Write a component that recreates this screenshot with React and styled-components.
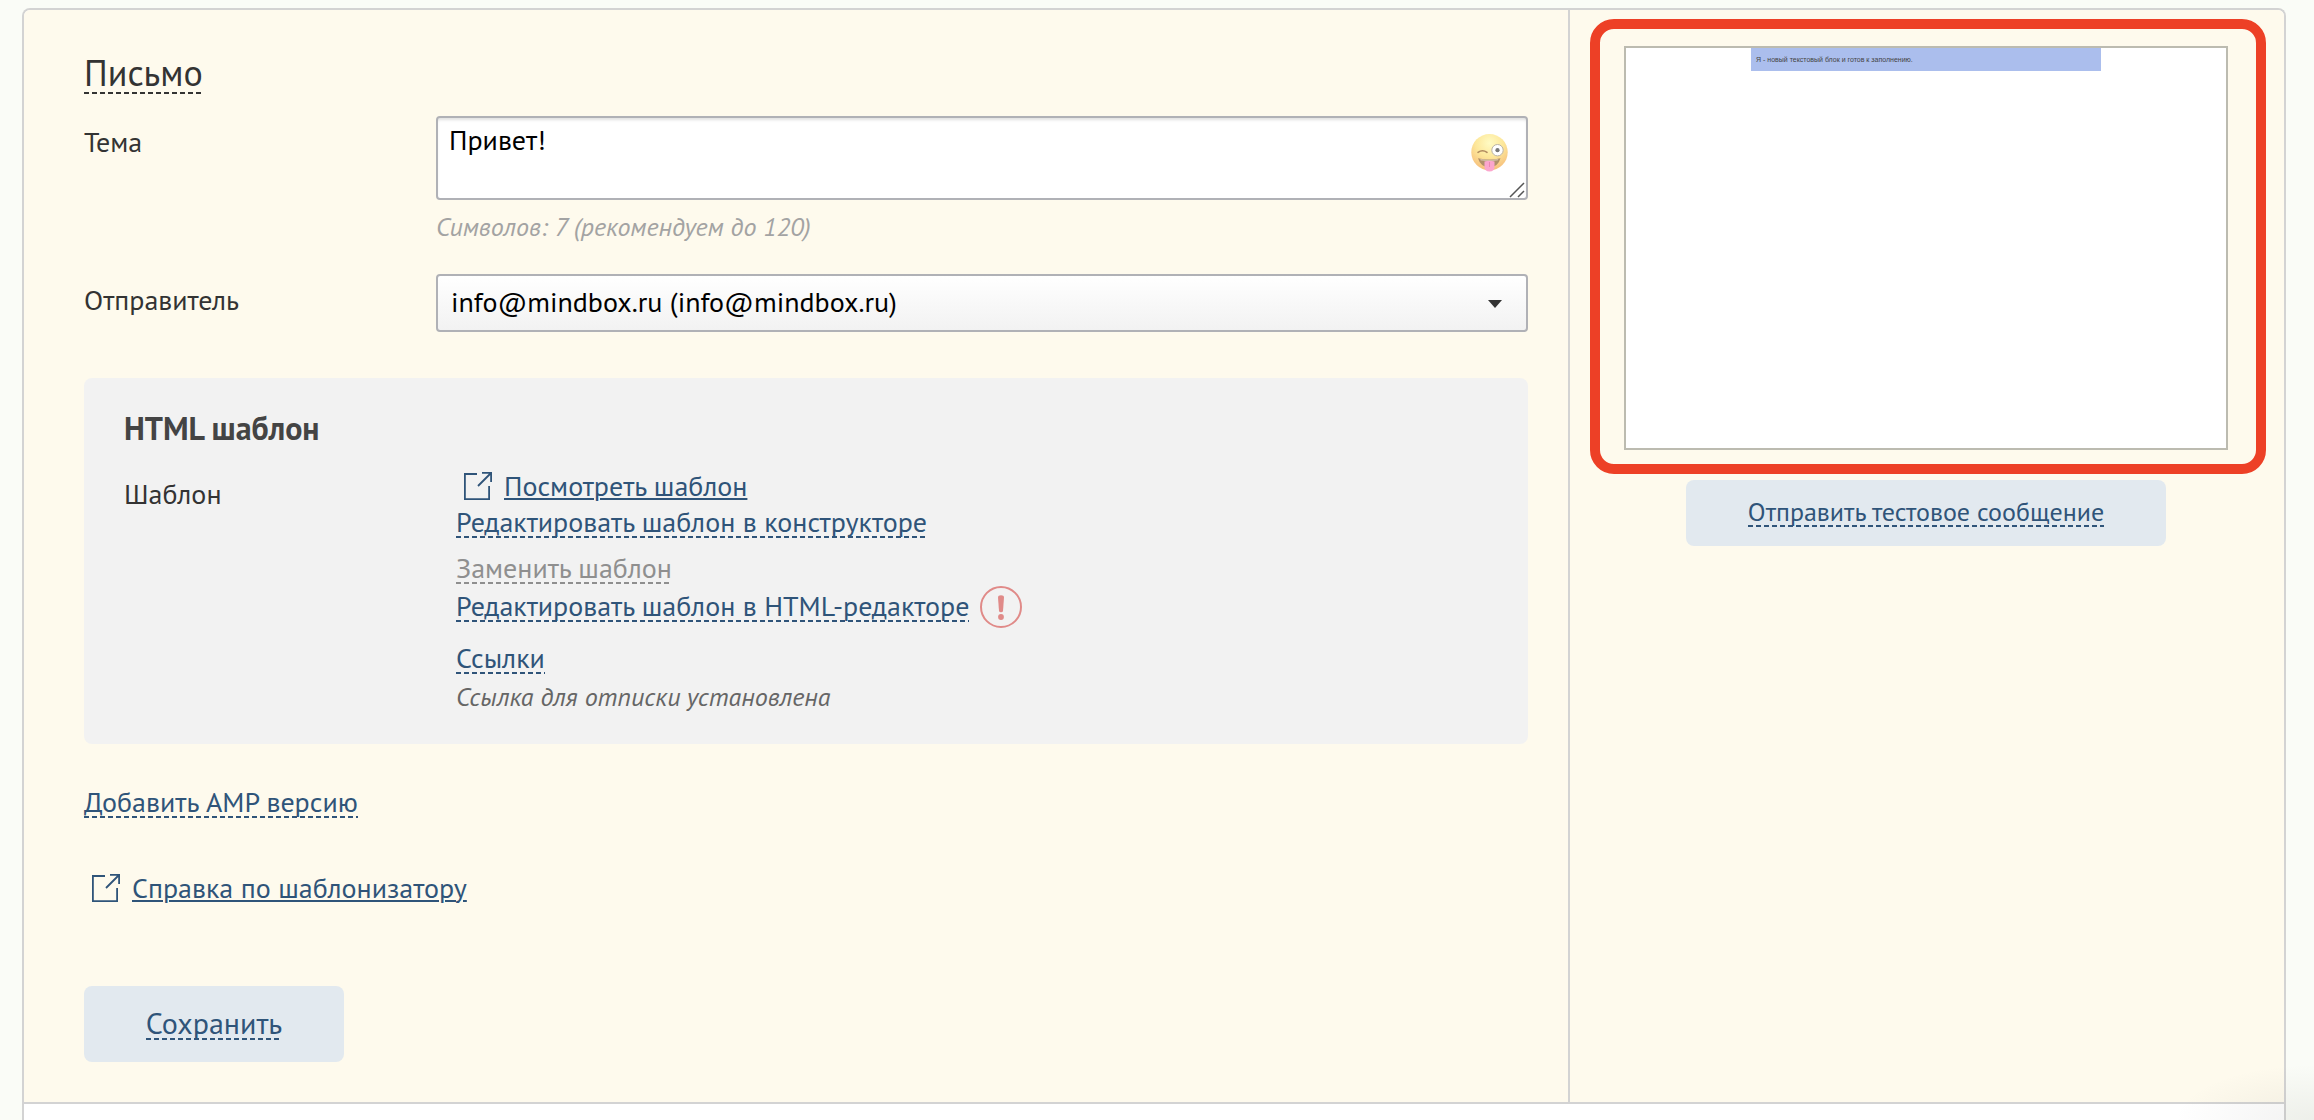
import React, { useState } from 'react'
import styled, { createGlobalStyle, css } from 'styled-components'

const GlobalStyle = createGlobalStyle`
	* {
		box-sizing: border-box;
	}

	body {
		margin: 0;
		background-color: #fafcf7;
		color: #333;
		font-family: 'PT Sans', 'Noto Sans', sans-serif;
		font-size: 28px;
		line-height: 32px;
	}
`

const dashed = css`
	padding: 0 0 2px;
	background: repeating-linear-gradient(90deg, currentColor 0 5px, transparent 5px 8px) left bottom / 100% 2px no-repeat;
`

const Page = styled.div`
	position: relative;
	display: flex;
	min-height: 100vh;
	padding: 8px 28px 0 22px;

	&::after {
		content: '';
		position: absolute;
		right: 0;
		bottom: 0;
		width: 140px;
		height: 56px;
		background: radial-gradient(ellipse at bottom right, rgba(90, 90, 80, 0.08), rgba(90, 90, 80, 0) 70%);
		pointer-events: none;
	}
`

const Frame = styled.div`
	display: flex;
	flex-direction: column;
	flex: 1;
	border: 2px solid #d3d3d3;
	border-bottom: none;
	border-radius: 8px 8px 0 0;
	background-color: #fff;
	overflow: hidden;
`

const Editor = styled.div`
	display: flex;
	background-color: #fefaed;
	border-bottom: 2px solid #d3d3d3;
`

const Form = styled.form`
	display: flex;
	flex-direction: column;
	align-items: flex-start;
	flex: 1;
	padding: 44px 40px 40px 60px;
`

const Title = styled.h1`
	${dashed}
	margin: 0 0 22px;
	font-size: 36px;
	font-weight: 400;
	line-height: 38px;
`

const Field = styled.div`
	display: flex;
	align-self: stretch;
	margin-bottom: ${(props) => props.$gap}px;
`

const Label = styled.label`
	flex: none;
	width: 352px;
	padding-top: 10px;
`

const Control = styled.div`
	position: relative;
	flex: 1;
`

const inputBox = css`
	display: block;
	width: 100%;
	margin: 0;
	border: 2px solid #b0b1b6;
	border-radius: 4px;
	color: #000;
	font-family: inherit;
	font-size: 28px;
	line-height: 32px;
`

const Subject = styled.textarea`
	${inputBox}
	height: 84px;
	padding: 6px 80px 6px 11px;
	background-color: #fff;
	box-shadow: inset 0 3px 3px -1px rgba(0, 0, 0, 0.12);
	resize: none;
`

const EmojiButton = styled.button`
	position: absolute;
	top: 18px;
	right: 20px;
	padding: 0;
	border: none;
	background: none;

	svg {
		display: block;
	}
`

const Grip = styled.svg`
	position: absolute;
	top: 66px;
	right: 3px;
	pointer-events: none;
`

const Hint = styled.p`
	margin: 11px 0 0;
	color: #a3a3a3;
	font-size: 26px;
	font-style: italic;
`

const Sender = styled.select`
	${inputBox}
	height: 58px;
	padding: 0 60px 2px 13px;
	background: linear-gradient(#fff, #f2f2f2);
	appearance: none;
`

const Arrow = styled.svg`
	position: absolute;
	top: 26px;
	right: 26px;
	pointer-events: none;
`

const Template = styled.section`
	align-self: stretch;
	margin-bottom: 44px;
	padding: 32px 40px;
	border-radius: 8px;
	background-color: #f2f2f2;
`

const TemplateTitle = styled.h2`
	margin: 0 0 26px;
	color: #444;
	font-size: 32px;
	line-height: 36px;
`

const TemplateBody = styled.div`
	display: flex;
`

const TemplateLabel = styled.div`
	flex: none;
	width: 332px;
	padding-top: 6px;
`

const TemplateActions = styled.div`
	display: flex;
	flex-direction: column;
	align-items: flex-start;
`

const ActionGroup = styled.div`
	display: flex;
	flex-direction: column;
	align-items: flex-start;
	gap: ${(props) => props.$gap}px;
	margin-bottom: ${(props) => (props.$last ? 0 : 16)}px;
`

const ActionRow = styled.div`
	display: flex;
	align-items: center;
	gap: 11px;
`

const ActionLink = styled.button`
	${dashed}
	border: none;
	color: #2f5479;
	font-family: inherit;
	font-size: 28px;
	line-height: 28px;

	&:disabled {
		color: #8f8f8f;
	}
`

const Note = styled.p`
	margin: 0;
	color: #666;
	font-size: 26px;
	font-style: italic;
	line-height: 30px;
`

const OuterLink = styled.a`
	display: flex;
	gap: 12px;
	padding-left: 8px;
	color: #2f5479;
	line-height: 28px;
	text-decoration: none;

	span {
		height: 30px;
		text-decoration: underline 2px;
		text-underline-offset: 2px;
	}
`

const HelpLink = styled(OuterLink)`
	margin: 56px 0 82px;
`

const Button = styled.button`
	width: ${(props) => (props.$wide ? 480 : 260)}px;
	height: ${(props) => (props.$wide ? 66 : 76)}px;
	padding: 0;
	border: none;
	border-radius: 8px;
	background-color: #e2e9ef;
	color: #2f5479;
	font-family: inherit;
	font-size: ${(props) => (props.$wide ? 26 : 30)}px;
	line-height: 1;

	span {
		${dashed}
		display: inline-block;
	}
`

const Sidebar = styled.aside`
	flex: none;
	width: 716px;
	padding: 9px 18px 0 20px;
	border-left: 2px solid #d3d3d3;
`

const Highlight = styled.div`
	margin-bottom: 6px;
	padding: 17px 28px 14px 24px;
	border: 10px solid #ed4026;
	border-radius: 24px;
`

const Preview = styled.div`
	height: 404px;
	border: 2px solid #bcbbb0;
	background-color: #fff;
`

const MailBlock = styled.p`
	width: 350px;
	margin: 0 auto;
	padding: 0 5px;
	background-color: #abbeed;
	color: #444;
	font-family: 'Liberation Sans', Arial, sans-serif;
	font-size: 7px;
	line-height: 23px;
`

const SidebarActions = styled.div`
	display: flex;
	justify-content: center;
	padding-right: 4px;
`

function ExternalIcon() {
	return (
		<svg width="28" height="28" viewBox="0 0 28 28" fill="none" stroke="#2f5479" strokeWidth="1.8" aria-hidden="true">
			<path d="M13 2H.9v25.1h24.2V14" />
			<path d="M18 .9h9.1V10M27 1L14 14" />
		</svg>
	)
}

function WarningIcon() {
	return (
		<svg width="42" height="42" viewBox="0 0 42 42" aria-hidden="true">
			<circle cx="21" cy="21" r="20" fill="none" stroke="#e08a88" strokeWidth="2" />
			<path d="M18 11.5Q18 9.3 21 9.3T24 11.5L23 25Q22.8 26.3 21 26.3T19 25Z" fill="#e08a88" />
			<circle cx="21" cy="31" r="2.9" fill="#e08a88" />
		</svg>
	)
}

function WinkIcon() {
	return (
		<svg width="37" height="38" viewBox="0 0 37 38" aria-hidden="true">
			<defs>
				<radialGradient id="face" cx="50%" cy="25%" r="76%">
					<stop offset="0" stopColor="#fffbc4" />
					<stop offset="0.5" stopColor="#fde79a" />
					<stop offset="1" stopColor="#f6bd7a" />
				</radialGradient>
			</defs>
			<circle cx="18.5" cy="18.2" r="18.2" fill="url(#face)" />
			<path d="M7 18.3q4.500-3.200 9 0" fill="none" stroke="#b08a5e" strokeWidth="1.600" strokeLinecap="round" />
			<circle cx="26.500" cy="16.200" r="5.700" fill="#fff" stroke="#b9b3a6" strokeWidth="1" />
			<circle cx="26.500" cy="16.200" r="2.100" fill="#777" />
			<path d="M7 24.200q11.500 2.600 22.500 0-2.500 9-11.200 9T7 24.200Z" fill="#b0906a" />
			<path d="M9 24.800q9.500 2 18.500 0l-.8 1.600q-8.500 1.600-17 0Z" fill="#efe6d6" opacity="0.5" />
			<path d="M13.500 27.500q5-1.600 10 0v5q0 5-5 5t-5-5Z" fill="#fba6cd" />
			<path d="M18.500 28v5" stroke="#ee86b4" strokeWidth="1" />
		</svg>
	)
}

function App() {
	const [subject, setSubject] = useState('Привет!')

	return (
		<Page>
			<GlobalStyle />
			<Frame>
				<Editor>
					<Form onSubmit={(e) => e.preventDefault()}>
						<Title>Письмо</Title>
						<Field $gap={31}>
							<Label htmlFor="subject">Тема</Label>
							<Control>
								<Subject id="subject" value={subject} onChange={(e) => setSubject(e.target.value)} />
								<EmojiButton type="button" aria-label="Эмодзи">
									<WinkIcon />
								</EmojiButton>
								<Grip width="16" height="16" viewBox="0 0 16 16" stroke="#555" strokeWidth="1.5">
									<path d="M1 15L15 1M9 15l6-6" />
								</Grip>
								<Hint>Символов: {subject.length} (рекомендуем до 120)</Hint>
							</Control>
						</Field>
						<Field $gap={46}>
							<Label htmlFor="sender">Отправитель</Label>
							<Control>
								<Sender id="sender">
									<option>info@mindbox.ru (info@mindbox.ru)</option>
								</Sender>
								<Arrow width="14" height="8" viewBox="0 0 14 8">
									<path d="M0 0h14L7 8Z" fill="#333" />
								</Arrow>
							</Control>
						</Field>
						<Template>
							<TemplateTitle>HTML шаблон</TemplateTitle>
							<TemplateBody>
								<TemplateLabel>Шаблон</TemplateLabel>
								<TemplateActions>
									<ActionGroup $gap={6}>
										<OuterLink href="#template">
											<ExternalIcon />
											<span>Посмотреть шаблон</span>
										</OuterLink>
										<ActionLink type="button">Редактировать шаблон в конструкторе</ActionLink>
									</ActionGroup>
									<ActionGroup $gap={2}>
										<ActionLink type="button" disabled>Заменить шаблон</ActionLink>
										<ActionRow>
											<ActionLink type="button">Редактировать шаблон в HTML-редакторе</ActionLink>
											<WarningIcon />
										</ActionRow>
									</ActionGroup>
									<ActionGroup $gap={8} $last>
										<ActionLink type="button">Ссылки</ActionLink>
										<Note>Ссылка для отписки установлена</Note>
									</ActionGroup>
								</TemplateActions>
							</TemplateBody>
						</Template>
						<ActionLink type="button">Добавить AMP версию</ActionLink>
						<HelpLink href="#help">
							<ExternalIcon />
							<span>Справка по шаблонизатору</span>
						</HelpLink>
						<Button type="submit"><span>Сохранить</span></Button>
					</Form>
					<Sidebar>
						<Highlight>
							<Preview>
								<MailBlock>Я - новый текстовый блок и готов к заполнению.</MailBlock>
							</Preview>
						</Highlight>
						<SidebarActions>
							<Button type="button" $wide><span>Отправить тестовое сообщение</span></Button>
						</SidebarActions>
					</Sidebar>
				</Editor>
			</Frame>
		</Page>
	)
}

export default App
